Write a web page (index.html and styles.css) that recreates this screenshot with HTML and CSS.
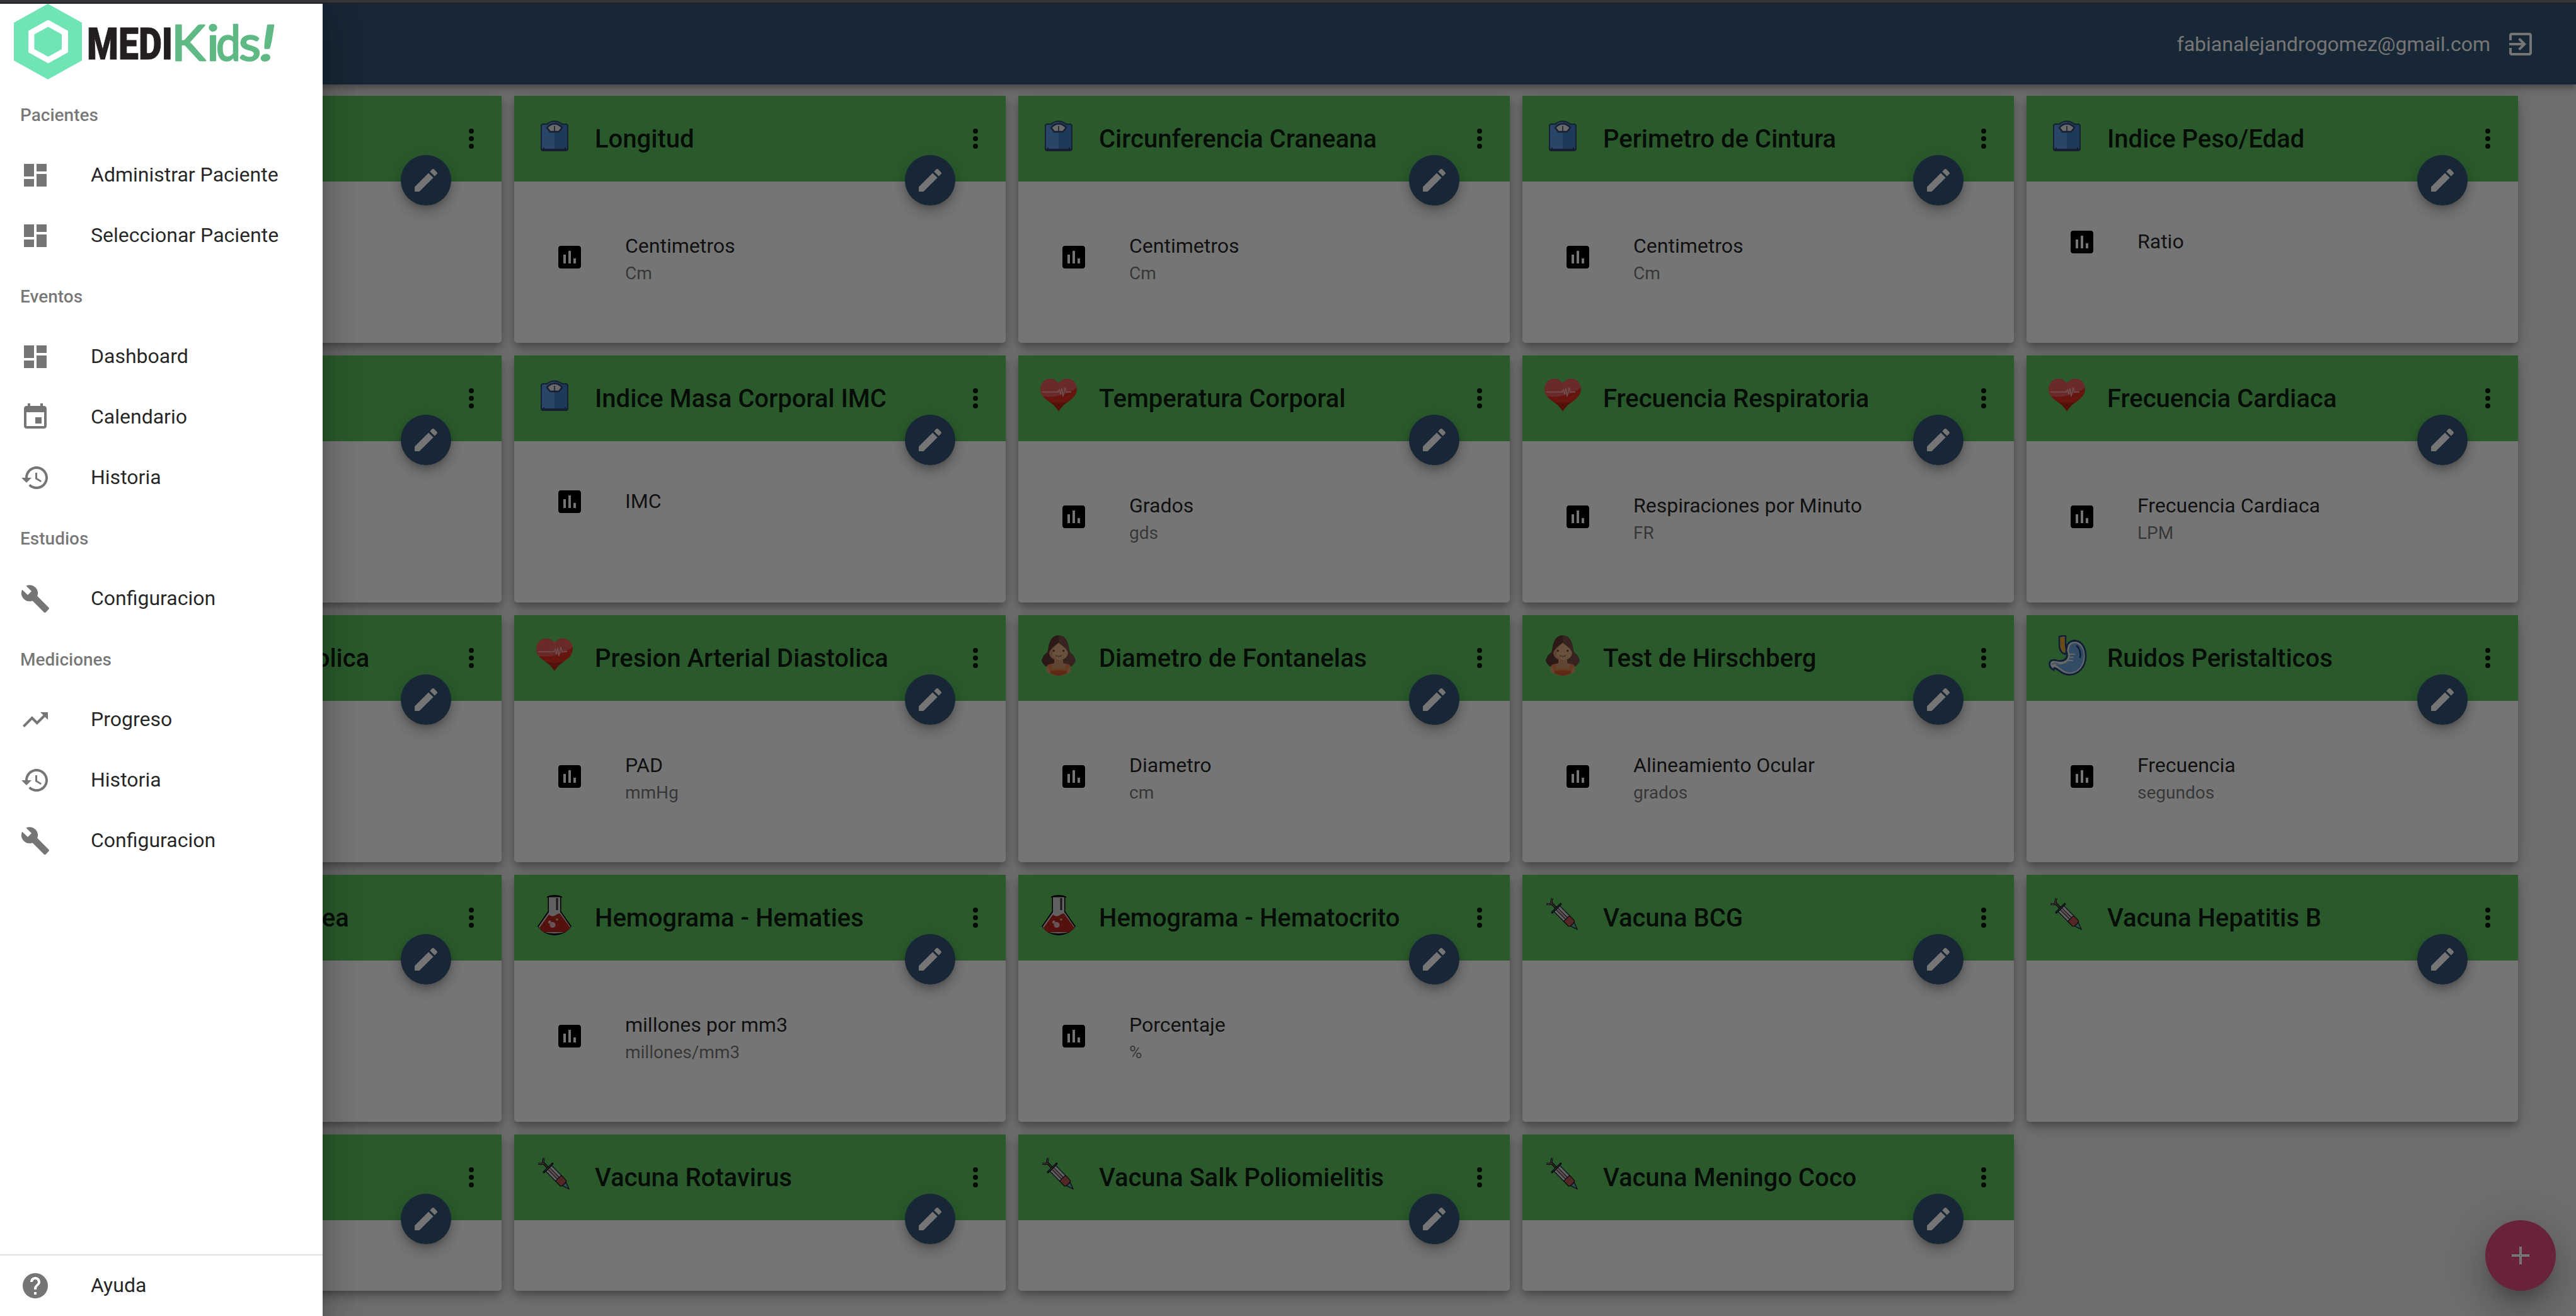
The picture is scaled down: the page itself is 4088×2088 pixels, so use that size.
FILE: index.html
```html
<!DOCTYPE html>
<html lang="es">
<head>
<meta charset="utf-8">
<title>MediKids</title>
<link rel="stylesheet" href="styles.css">
</head>
<body>
<svg class="sprite" aria-hidden="true">
  <symbol id="dashboard" viewBox="0 0 24 24"><path d="M3 13h8V3H3v10zm0 8h8v-6H3v6zm10 0h8V11h-8v10zm0-18v6h8V3h-8z"/></symbol>
  <symbol id="event" viewBox="0 0 24 24"><path d="M17 12h-5v5h5v-5zM16 1v2H8V1H6v2H5c-1.110 0-1.990.9-1.990 2L3 19c0 1.100.89 2 2 2h14c1.100 0 2-.9 2-2V5c0-1.100-.9-2-2-2h-1V1h-2zm3 18H5V8h14v11z"/></symbol>
  <symbol id="history" viewBox="0 0 24 24"><path d="M13 3c-4.970 0-9 4.030-9 9H1l3.890 3.890.07.14L9 12H6c0-3.870 3.130-7 7-7s7 3.130 7 7-3.130 7-7 7c-1.930 0-3.680-.79-4.940-2.060l-1.420 1.420C8.270 19.990 10.510 21 13 21c4.970 0 9-4.030 9-9s-4.030-9-9-9zm-1 5v5l4.280 2.540.72-1.210-3.500-2.080V8H12z"/></symbol>
  <symbol id="build" viewBox="0 0 24 24"><path d="M22.700 19l-9.100-9.100c.9-2.300.4-5-1.500-6.900-2-2-5-2.400-7.400-1.300L9 6 6 9 1.600 4.700C.4 7.100.9 10.100 2.900 12.100c1.900 1.900 4.600 2.400 6.900 1.500l9.100 9.100c.4.4 1 .4 1.400 0l2.300-2.300c.5-.4.5-1.100.1-1.400z"/></symbol>
  <symbol id="trend" viewBox="0 0 24 24"><path d="M16 6l2.290 2.290-4.880 4.880-4-4L2 16.590 3.410 18l6-6 4 4 6.300-6.290L22 12V6z"/></symbol>
  <symbol id="help" viewBox="0 0 24 24"><path d="M12 2C6.480 2 2 6.480 2 12s4.480 10 10 10 10-4.480 10-10S17.520 2 12 2zm1 17h-2v-2h2v2zm2.070-7.750l-.9.920C13.450 12.900 13 13.500 13 15h-2v-.5c0-1.100.45-2.100 1.170-2.830l1.240-1.260c.37-.36.59-.86.59-1.410 0-1.100-.9-2-2-2s-2 .9-2 2H8c0-2.210 1.790-4 4-4s4 1.790 4 4c0 .88-.36 1.680-.93 2.250z"/></symbol>
  <symbol id="edit" viewBox="0 0 24 24"><path d="M3 17.250V21h3.750L17.810 9.940l-3.750-3.750L3 17.250zM20.710 7.040c.39-.39.39-1.020 0-1.410l-2.340-2.340c-.39-.39-1.020-.39-1.410 0l-1.830 1.830 3.750 3.750 1.830-1.830z"/></symbol>
  <symbol id="more" viewBox="0 0 24 24"><circle cx="12" cy="6" r="2"/><circle cx="12" cy="12" r="2"/><circle cx="12" cy="18" r="2"/></symbol>
  <symbol id="chart" viewBox="0 0 24 24"><path d="M19 3H5c-1.100 0-2 .9-2 2v14c0 1.100.9 2 2 2h14c1.100 0 2-.9 2-2V5c0-1.100-.9-2-2-2zM9 17H7v-7h2v7zm4 0h-2V7h2v10zm4 0h-2v-4h2v4z"/></symbol>
  <symbol id="exit" viewBox="0 0 24 24"><path d="M10.090 15.590L11.500 17l5-5-5-5-1.410 1.410L12.670 11H3v2h9.670l-2.580 2.590zM19 3H5c-1.110 0-2 .9-2 2v4h2V5h14v14H5v-4H3v4c0 1.100.89 2 2 2h14c1.100 0 2-.9 2-2V5c0-1.100-.9-2-2-2z"/></symbol>
  <symbol id="add" viewBox="0 0 24 24"><path d="M19 13h-6v6h-2v-6H5v-2h6V5h2v6h6v2z"/></symbol>

  <symbol id="scale" viewBox="0 0 64 64">
    <path d="M14 13H20Q25 8.500 32 8.500T44 13H50Q53 13 53 16V52Q53 55 50 55H14Q11 55 11 52V16Q11 13 14 13Z" fill="#5b98e4"/>
    <path d="M32 8.500Q39 8.500 44 13H50Q53 13 53 16V52Q53 55 50 55H32Z" fill="#437ec4"/>
    <path d="M11 53H53M14 13H20Q25 8.500 32 8.500T44 13H50Q53 13 53 16V52Q53 55 50 55H14Q11 55 11 52V16Q11 13 14 13Z" fill="none" stroke="#2f4568" stroke-width="2"/>
    <path d="M20 18.500Q25 12.500 32 12.500T44 18.500L39 25H25Z" fill="#e4e4e8" stroke="#2f4568" stroke-width="2.400"/>
    <path d="M32 16V24M28 25.500H36" stroke="#2f4568" stroke-width="1.600"/>
    <path d="M15 50V52M49 50V52" stroke="#2f4568" stroke-width="2"/>
  </symbol>
  <symbol id="heart" viewBox="0 0 64 64">
    <path d="M32 13C26 2 12 3 6 12C-1 24 6 34 15 40C23 45 28 50 32 56.500C36 50 41 45 49 40C58 34 65 24 58 12C52 3 38 2 32 13Z" fill="#df2f22"/>
    <path d="M15 40C23 45 28 50 32 56.500C36 50 41 45 49 40C40 45 24 45 15 40Z" fill="#b6261b"/>
    <path d="M32 13C26 2 12 3 6 12C1 20 3 28 7 33Q37 36 61 19Q60 15 58 12C52 3 38 2 32 13Z" fill="#e85c5c"/>
    <path d="M6 26H31L33 22L35 30L37 20L39 33L42 19L44 26H52" fill="none" stroke="#f2b4b4" stroke-width="1.300"/>
  </symbol>
  <symbol id="girl" viewBox="0 0 64 64">
    <path d="M32 0C20 0 16 12 15 24C14 29 7 31 7 35C3 40 6 44 8 45C9 50 17 52 21 48H32Z" fill="#5f3836"/>
    <path d="M32 0C44 0 48 12 49 24C50 29 57 31 57 35C61 40 58 44 56 45C55 50 47 52 43 48H32Z" fill="#785046"/>
    <path d="M25 36H39V44L50 48Q52 52 52 57Q43 64 32 64T12 57Q12 52 14 48L25 44Z" fill="#d39b70"/>
    <path d="M32 12Q18 22 17 28Q19 39 32 39T47 28Q46 22 32 12Z" fill="#e0b085"/>
    <path d="M32 12Q18 22 17 28Q19 39 32 39Q24 36 22 30Q22 22 32 12Z" fill="#d0996e"/>
    <circle cx="24.300" cy="24.700" r="1.600" fill="#5f3836"/><circle cx="39.700" cy="24.700" r="1.600" fill="#5f3836"/>
    <path d="M27 32Q32 35 37 32" fill="none" stroke="#a8683f" stroke-width="1.700"/>
    <path d="M14 47L20 45L23 53H41L44 45L50 47L45 60Q39 64 32 64T19 60Z" fill="#e37a46"/>
    <path d="M19 56H45V60Q39 64 32 64T19 60Z" fill="#cf5c30"/>
  </symbol>
  <symbol id="stomach" viewBox="0 0 64 64">
    <path d="M20 2L30 0V16Q31 22 33 24L29 30Q20 27 20 15Z" fill="#e0a63a" stroke="#243f78" stroke-width="2.500"/>
    <path d="M31 25C31 12 37 8.500 45 8.500C57 9 62 22 62 33C62 50 51 62.500 35 62.500C22 62 18 52 12 52L11 55Q4 51 4.500 45C5 39 11 38 16 40C26 42 36 39 31 25Z" fill="#e0e2e8" stroke="#243f78" stroke-width="2.800"/>
    <path d="M35.500 26C35 16 39 12.500 45 12.500C55 13.500 59 24 59 33C58 49 49 58.500 36 59C25 58 20 49 13 46C27 48 41 42 35.500 26Z" fill="#6ba6da"/>
    <path d="M35 30H44M35 35H42M34 40H41" stroke="#e0e2e8" stroke-width="2.200" stroke-linecap="round"/>
    <path d="M48 17Q55 24 53 35" fill="none" stroke="#243f78" stroke-width="2.600" stroke-linecap="round"/>
    <path d="M8 46Q14 42 19 46" fill="none" stroke="#8fa9c8" stroke-width="1.500"/>
  </symbol>
  <symbol id="flask" viewBox="0 0 64 64">
    <clipPath id="round"><circle cx="32" cy="32" r="32"/></clipPath>
    <g clip-path="url(#round)">
      <path d="M20 0H44V4H42.500V26L60 51V64H4V51L21.500 26V4H20Z" fill="#000"/>
      <path d="M23 3.500H41V27L57 50Q54 61 32 61T7 50L23 27Z" fill="#d4d4d8"/>
      <path d="M23 31Q28 36 34 32T41 30L57 52Q54 59 52 59H12L8 52Z" fill="#ba261d"/>
      <path d="M36 5V24" stroke="#333" stroke-width="3"/>
      <circle cx="29" cy="47.500" r="4.600" fill="#dcb8b4"/><circle cx="24.300" cy="43" r="2.500" fill="#dcb8b4"/><circle cx="36" cy="39" r="1.800" fill="#dcb8b4"/>
    </g>
  </symbol>
  <symbol id="syringe" viewBox="0 0 64 64">
    <g transform="translate(13.500 12.500) rotate(45.300)" stroke="#1d1d24" stroke-width="1.300">
      <path d="M-4 -6.500Q-1 -1 1 0T-4 6.500" fill="none" stroke="#000" stroke-width="3.200"/>
      <path d="M0 0H14" stroke="#000" stroke-width="3.800"/>
      <path d="M-4 -6.500Q-1 -1 1 0T-4 6.500M0 0H14" fill="none" stroke="#c29a9a" stroke-width="1"/>
      <path d="M13 -6.500H36V6.500H13Z" fill="#cfd0d8"/>
      <path d="M13 -2H36V2H13Z" fill="#c9a9a6" stroke-width="1"/>
      <path d="M35 -6.500H46L48 -4V4L46 6.500H35Z" fill="#b7574f"/>
      <path d="M48 -4L55 -1.500L59 0L55 1.500L48 4Z" fill="#5ea7a8"/>
      <path d="M12 -9.500V9.500" stroke="#111820" stroke-width="3.400" stroke-linecap="round"/>
      <path d="M12 -9V9" stroke="#4c5a68" stroke-width="1"/>
    </g>
  </symbol>
</svg>

<div class="window-edge"></div>
<div class="app">
  <header class="appbar">
    <span>fabianalejandrogomez@gmail.com</span>
    <svg class="icon"><use href="#exit"/></svg>
  </header>

  <main class="grid">
    <article class="card"><div class="card-head"><svg class="avatar"><use href="#scale"/></svg><h2>Peso</h2><svg class="icon"><use href="#more"/></svg></div><button class="edit"><svg class="icon"><use href="#edit"/></svg></button></article>
    <article class="card"><div class="card-head"><svg class="avatar"><use href="#scale"/></svg><h2>Longitud</h2><svg class="icon"><use href="#more"/></svg></div><button class="edit"><svg class="icon"><use href="#edit"/></svg></button><div class="measure"><svg class="icon"><use href="#chart"/></svg><div><p>Centimetros</p><small>Cm</small></div></div></article>
    <article class="card"><div class="card-head"><svg class="avatar"><use href="#scale"/></svg><h2>Circunferencia Craneana</h2><svg class="icon"><use href="#more"/></svg></div><button class="edit"><svg class="icon"><use href="#edit"/></svg></button><div class="measure"><svg class="icon"><use href="#chart"/></svg><div><p>Centimetros</p><small>Cm</small></div></div></article>
    <article class="card"><div class="card-head"><svg class="avatar"><use href="#scale"/></svg><h2>Perimetro de Cintura</h2><svg class="icon"><use href="#more"/></svg></div><button class="edit"><svg class="icon"><use href="#edit"/></svg></button><div class="measure"><svg class="icon"><use href="#chart"/></svg><div><p>Centimetros</p><small>Cm</small></div></div></article>
    <article class="card"><div class="card-head"><svg class="avatar"><use href="#scale"/></svg><h2>Indice Peso/Edad</h2><svg class="icon"><use href="#more"/></svg></div><button class="edit"><svg class="icon"><use href="#edit"/></svg></button><div class="measure single"><svg class="icon"><use href="#chart"/></svg><div><p>Ratio</p></div></div></article>

    <article class="card"><div class="card-head"><svg class="avatar"><use href="#scale"/></svg><h2></h2><svg class="icon"><use href="#more"/></svg></div><button class="edit"><svg class="icon"><use href="#edit"/></svg></button></article>
    <article class="card"><div class="card-head"><svg class="avatar"><use href="#scale"/></svg><h2>Indice Masa Corporal IMC</h2><svg class="icon"><use href="#more"/></svg></div><button class="edit"><svg class="icon"><use href="#edit"/></svg></button><div class="measure single"><svg class="icon"><use href="#chart"/></svg><div><p>IMC</p></div></div></article>
    <article class="card"><div class="card-head"><svg class="avatar"><use href="#heart"/></svg><h2>Temperatura Corporal</h2><svg class="icon"><use href="#more"/></svg></div><button class="edit"><svg class="icon"><use href="#edit"/></svg></button><div class="measure"><svg class="icon"><use href="#chart"/></svg><div><p>Grados</p><small>gds</small></div></div></article>
    <article class="card"><div class="card-head"><svg class="avatar"><use href="#heart"/></svg><h2>Frecuencia Respiratoria</h2><svg class="icon"><use href="#more"/></svg></div><button class="edit"><svg class="icon"><use href="#edit"/></svg></button><div class="measure"><svg class="icon"><use href="#chart"/></svg><div><p>Respiraciones por Minuto</p><small>FR</small></div></div></article>
    <article class="card"><div class="card-head"><svg class="avatar"><use href="#heart"/></svg><h2>Frecuencia Cardiaca</h2><svg class="icon"><use href="#more"/></svg></div><button class="edit"><svg class="icon"><use href="#edit"/></svg></button><div class="measure"><svg class="icon"><use href="#chart"/></svg><div><p>Frecuencia Cardiaca</p><small>LPM</small></div></div></article>

    <article class="card"><div class="card-head"><svg class="avatar"><use href="#heart"/></svg><h2>Presion Arterial Sistolica</h2><svg class="icon"><use href="#more"/></svg></div><button class="edit"><svg class="icon"><use href="#edit"/></svg></button></article>
    <article class="card"><div class="card-head"><svg class="avatar"><use href="#heart"/></svg><h2>Presion Arterial Diastolica</h2><svg class="icon"><use href="#more"/></svg></div><button class="edit"><svg class="icon"><use href="#edit"/></svg></button><div class="measure"><svg class="icon"><use href="#chart"/></svg><div><p>PAD</p><small>mmHg</small></div></div></article>
    <article class="card"><div class="card-head"><svg class="avatar"><use href="#girl"/></svg><h2>Diametro de Fontanelas</h2><svg class="icon"><use href="#more"/></svg></div><button class="edit"><svg class="icon"><use href="#edit"/></svg></button><div class="measure"><svg class="icon"><use href="#chart"/></svg><div><p>Diametro</p><small>cm</small></div></div></article>
    <article class="card"><div class="card-head"><svg class="avatar"><use href="#girl"/></svg><h2>Test de Hirschberg</h2><svg class="icon"><use href="#more"/></svg></div><button class="edit"><svg class="icon"><use href="#edit"/></svg></button><div class="measure"><svg class="icon"><use href="#chart"/></svg><div><p>Alineamiento Ocular</p><small>grados</small></div></div></article>
    <article class="card"><div class="card-head"><svg class="avatar"><use href="#stomach"/></svg><h2>Ruidos Peristalticos</h2><svg class="icon"><use href="#more"/></svg></div><button class="edit"><svg class="icon"><use href="#edit"/></svg></button><div class="measure"><svg class="icon"><use href="#chart"/></svg><div><p>Frecuencia</p><small>segundos</small></div></div></article>

    <article class="card"><div class="card-head"><svg class="avatar"><use href="#flask"/></svg><h2 class="spaced">Saturacion Sanguinea</h2><svg class="icon"><use href="#more"/></svg></div><button class="edit"><svg class="icon"><use href="#edit"/></svg></button></article>
    <article class="card"><div class="card-head"><svg class="avatar"><use href="#flask"/></svg><h2>Hemograma - Hematies</h2><svg class="icon"><use href="#more"/></svg></div><button class="edit"><svg class="icon"><use href="#edit"/></svg></button><div class="measure"><svg class="icon"><use href="#chart"/></svg><div><p>millones por mm3</p><small>millones/mm3</small></div></div></article>
    <article class="card"><div class="card-head"><svg class="avatar"><use href="#flask"/></svg><h2>Hemograma - Hematocrito</h2><svg class="icon"><use href="#more"/></svg></div><button class="edit"><svg class="icon"><use href="#edit"/></svg></button><div class="measure"><svg class="icon"><use href="#chart"/></svg><div><p>Porcentaje</p><small>%</small></div></div></article>
    <article class="card"><div class="card-head"><svg class="avatar"><use href="#syringe"/></svg><h2>Vacuna BCG</h2><svg class="icon"><use href="#more"/></svg></div><button class="edit"><svg class="icon"><use href="#edit"/></svg></button></article>
    <article class="card"><div class="card-head"><svg class="avatar"><use href="#syringe"/></svg><h2>Vacuna Hepatitis B</h2><svg class="icon"><use href="#more"/></svg></div><button class="edit"><svg class="icon"><use href="#edit"/></svg></button></article>

    <article class="card"><div class="card-head"><svg class="avatar"><use href="#syringe"/></svg><h2></h2><svg class="icon"><use href="#more"/></svg></div><button class="edit"><svg class="icon"><use href="#edit"/></svg></button></article>
    <article class="card"><div class="card-head"><svg class="avatar"><use href="#syringe"/></svg><h2>Vacuna Rotavirus</h2><svg class="icon"><use href="#more"/></svg></div><button class="edit"><svg class="icon"><use href="#edit"/></svg></button></article>
    <article class="card"><div class="card-head"><svg class="avatar"><use href="#syringe"/></svg><h2>Vacuna Salk Poliomielitis</h2><svg class="icon"><use href="#more"/></svg></div><button class="edit"><svg class="icon"><use href="#edit"/></svg></button></article>
    <article class="card"><div class="card-head"><svg class="avatar"><use href="#syringe"/></svg><h2>Vacuna Meningo Coco</h2><svg class="icon"><use href="#more"/></svg></div><button class="edit"><svg class="icon"><use href="#edit"/></svg></button></article>
  </main>

  <button class="fab"><svg class="icon"><use href="#add"/></svg></button>
  <div class="scrim"></div>

  <aside class="drawer">
    <svg class="logo" viewBox="0 0 512 128">
      <path d="M76 0L130 30V90L76 120L22 90V30Z" fill="#6fe4b5"/>
      <path d="M76.500 25.500L108 43V77L76.500 94.500L45 77V43Z" fill="#fff"/>
      <path d="M76.500 36.500L98 48.500V72L76.500 84L54.500 72V48.500Z" fill="#6fe4b5"/>
      <text class="logo-medi" x="138" y="88" textLength="136" lengthAdjust="spacingAndGlyphs">MEDI</text>
      <g class="logo-kids">
        <text x="272" y="90" textLength="54" lengthAdjust="spacingAndGlyphs">K</text>
        <text x="328" y="90" textLength="20" lengthAdjust="spacingAndGlyphs">i</text>
        <text x="343" y="90" textLength="39" lengthAdjust="spacingAndGlyphs">d</text>
        <text x="379" y="90" textLength="35" lengthAdjust="spacingAndGlyphs">s</text>
        <text x="408" y="90" transform="translate(14 0) skewX(-9)" textLength="26" lengthAdjust="spacingAndGlyphs">!</text>
      </g>
    </svg>
    <nav>
      <h3>Pacientes</h3>
      <a><svg class="icon"><use href="#dashboard"/></svg>Administrar Paciente</a>
      <a><svg class="icon"><use href="#dashboard"/></svg>Seleccionar Paciente</a>
      <h3>Eventos</h3>
      <a><svg class="icon"><use href="#dashboard"/></svg>Dashboard</a>
      <a><svg class="icon"><use href="#event"/></svg>Calendario</a>
      <a><svg class="icon"><use href="#history"/></svg>Historia</a>
      <h3>Estudios</h3>
      <a><svg class="icon"><use href="#build"/></svg>Configuracion</a>
      <h3>Mediciones</h3>
      <a><svg class="icon"><use href="#trend"/></svg>Progreso</a>
      <a><svg class="icon"><use href="#history"/></svg>Historia</a>
      <a><svg class="icon"><use href="#build"/></svg>Configuracion</a>
    </nav>
    <nav class="drawer-foot">
      <a><svg class="icon"><use href="#help"/></svg>Ayuda</a>
    </nav>
  </aside>
</div>
</body>
</html>
```
FILE: styles.css
```css
* { box-sizing: border-box; }

body {
  margin: 0;
  height: 2088px;
  overflow: hidden;
  background: #efefef;
  color: rgba(0, 0, 0, .87);
  font: 400 32px/48px Roboto, sans-serif;
}

h2, h3, p { margin: 0; }
button { border: 0; padding: 0; }

.sprite { position: absolute; width: 0; height: 0; }

.icon {
  width: 48px;
  height: 48px;
  flex: none;
  fill: currentColor;
}

.window-edge {
  height: 6px;
  background: #343539;
  border-bottom: 2px solid #202123;
}

.app {
  position: relative;
  height: 2082px;
  overflow: hidden;
}

.appbar {
  position: relative;
  display: flex;
  align-items: center;
  justify-content: flex-end;
  gap: 24px;
  height: 128px;
  padding-right: 64px;
  background: #325575;
  color: #fff;
  box-shadow: 0 4px 8px -2px rgba(0, 0, 0, .2), 0 8px 10px rgba(0, 0, 0, .14), 0 2px 20px rgba(0, 0, 0, .12);
}

.grid {
  display: grid;
  grid-template-columns: repeat(5, 780px);
  grid-template-rows: repeat(4, 392px) 248px;
  gap: 20px;
  padding: 18px 16px;
}

.card {
  position: relative;
  background: #fff;
  border-radius: 0 0 5px 5px;
  box-shadow: 0 6px 10px -2px rgba(0, 0, 0, .2), 0 10px 16px rgba(0, 0, 0, .14), 0 2px 28px rgba(0, 0, 0, .12);
}

.card-head {
  display: flex;
  align-items: center;
  gap: 32px;
  height: 136px;
  padding: 0 24px 0 32px;
  background: #5dc460;
}

.card-head h2 {
  flex: 1;
  padding-top: 2px;
  font-size: 40px;
  font-weight: 500;
  line-height: 64px;
  white-space: nowrap;
}

.card-head .spaced { word-spacing: 19px; }

.avatar {
  width: 64px;
  height: 64px;
  margin-bottom: 8px;
}

.edit, .fab {
  position: absolute;
  display: flex;
  align-items: center;
  justify-content: center;
  border-radius: 50%;
  color: #fff;
}

.edit {
  top: 94px;
  right: 80px;
  width: 80px;
  height: 80px;
  background: #325575;
  box-shadow: 0 6px 10px -2px rgba(0, 0, 0, .2), 0 12px 20px rgba(0, 0, 0, .14), 0 2px 36px rgba(0, 0, 0, .12);
}

.fab {
  right: 32px;
  bottom: 40px;
  width: 112px;
  height: 112px;
  background: #e44e7a;
  box-shadow: 0 18px 22px -10px rgba(0, 0, 0, .2), 0 36px 56px 4px rgba(0, 0, 0, .14), 0 14px 68px 12px rgba(0, 0, 0, .12);
}

.measure {
  display: flex;
  align-items: center;
  gap: 64px;
  height: 144px;
  margin: 48px 0 0 64px;
}

.measure p { line-height: 51px; }
.measure > .icon { color: #000; }

.measure small {
  display: block;
  color: rgba(0, 0, 0, .54);
  font-size: 28px;
  line-height: 35px;
}

.measure.single { height: 96px; }
.measure.single p { padding-bottom: 2px; }

.scrim {
  position: absolute;
  inset: 0;
  background: rgba(0, 0, 0, .54);
}

.drawer {
  position: absolute;
  inset: 0 auto 0 0;
  display: flex;
  flex-direction: column;
  width: 512px;
  background: #fff;
  box-shadow: 0 16px 20px -10px rgba(0, 0, 0, .2), 0 32px 48px 4px rgba(0, 0, 0, .14), 0 12px 60px 10px rgba(0, 0, 0, .12);
}

.logo { width: 512px; height: 128px; flex: none; }

.logo-medi {
  fill: #231f20;
  stroke: #231f20;
  stroke-width: 1;
  font: 900 71px Roboto, sans-serif;
}

.logo-kids {
  fill: #5fb985;
  stroke: #5fb985;
  stroke-width: 2.5;
  stroke-linejoin: round;
  font: 400 78px Lato, sans-serif;
}

.drawer h3 {
  padding: 2px 0 0 32px;
  color: rgba(0, 0, 0, .54);
  font-size: 28px;
  font-weight: 500;
  line-height: 94px;
}

.drawer a {
  display: flex;
  align-items: center;
  gap: 64px;
  height: 96px;
  padding: 0 0 2px 32px;
}

.drawer a .icon {
  margin-top: 2px;
  color: #757575;
}

.drawer-foot {
  margin-top: auto;
  border-top: 2px solid #e0e0e0;
}
```
